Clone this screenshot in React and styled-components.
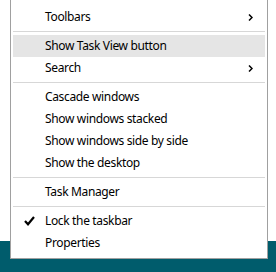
import React from 'react'
import styled, { createGlobalStyle } from 'styled-components';

const Global = createGlobalStyle`
  html, body {
    margin: 0;
    padding: 0;
    background: #ffffff;
  }
  body {
    font-family: 'Noto Sans', 'Open Sans', sans-serif;
  }
`

const Screen = styled.div`
  position: relative;
  width: 276px;
  height: 272px;
  display: flex;
  flex-direction: column;
  overflow: hidden;
`

const Desktop = styled.div`
  flex: 1;
  background: #ffffff;
`

const Taskbar = styled.div`
  height: 31px;
  background: #005c6c;
`

const Menu = styled.ul`
  position: absolute;
  left: 10px;
  top: 0;
  width: 254px;
  margin: 0;
  padding: 6px 1px 4px 1px;
  list-style: none;
  background: #ffffff;
  border: 1px solid #a0a0a0;
  border-top: none;
`

const Item = styled.li`
  position: relative;
  height: 22px;
  line-height: 22px;
  margin: 0 1px;
  padding-left: 32px;
  font-size: 12px;
  letter-spacing: -0.35px;
  color: #000000;
  background: ${props => props.active ? '#e5e5e5' : 'transparent'};
  white-space: nowrap;
`

const Separator = styled.li`
  height: 1px;
  margin: 3px 1px;
  background: #d7d7d7;
`

const Mark = styled.span`
  position: absolute;
  top: 0;
  height: 22px;
  display: flex;
  align-items: center;
  left: ${props => props.left};
`

const Chevron = () => (
  <svg width="5" height="7" viewBox="0 0 5 7">
    <path d="M1 0.5 L4 3.5 L1 6.5" fill="none" stroke="#000" strokeWidth="1.5" />
  </svg>
)

const Check = () => (
  <svg width="11" height="10" viewBox="0 0 11 10">
    <path d="M1 5 L4 8.3 L10 1" fill="none" stroke="#000" strokeWidth="2.2" strokeLinejoin="miter" />
  </svg>
)

const Row = ({label, sub, checked, active}) => (
  <Item active={active}>
    {checked && <Mark left="11px"><Check /></Mark>}
    {label}
    {sub && <Mark left="235px"><Chevron /></Mark>}
  </Item>
)

const App = () => (
  <Screen>
    <Global />
    <Desktop />
    <Taskbar />
    <Menu>
      <Row label="Toolbars" sub />
      <Separator />
      <Row label="Show Task View button" active />
      <Row label="Search" sub />
      <Separator />
      <Row label="Cascade windows" />
      <Row label="Show windows stacked" />
      <Row label="Show windows side by side" />
      <Row label="Show the desktop" />
      <Separator />
      <Row label="Task Manager" />
      <Separator />
      <Row label="Lock the taskbar" checked />
      <Row label="Properties" />
    </Menu>
  </Screen>
)

export default App
